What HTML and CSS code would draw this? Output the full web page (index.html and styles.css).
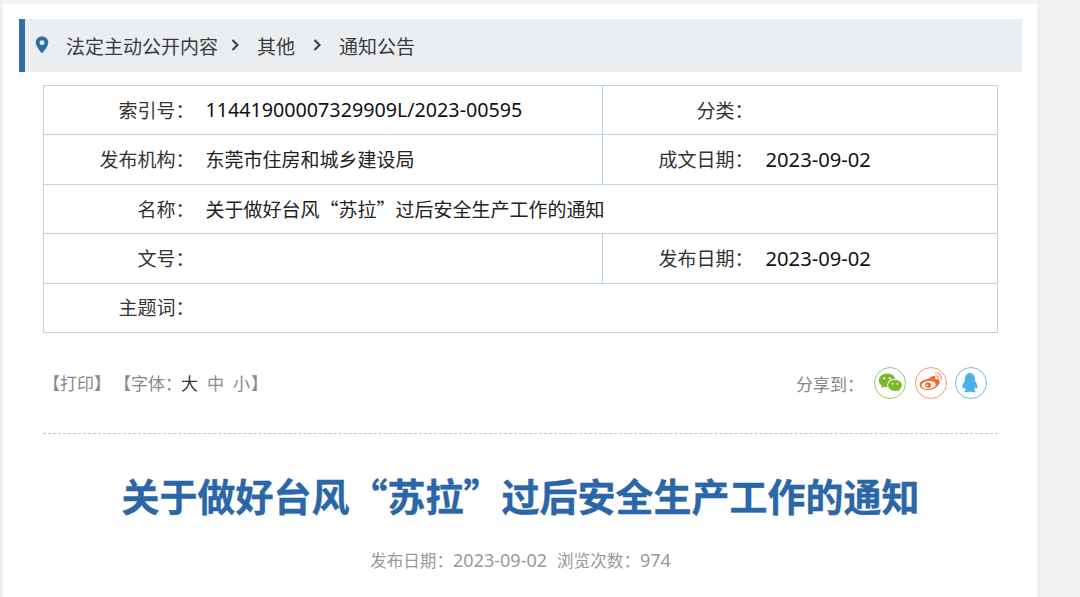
FILE: index.html
```html
<!DOCTYPE html>
<html lang="zh-CN">
<head>
<meta charset="utf-8">
<title>关于做好台风“苏拉”过后安全生产工作的通知</title>
<link rel="stylesheet" href="styles.css">
</head>
<body>
<main class="panel">
  <nav class="crumbs">
    <svg class="pin" viewBox="0 0 14 18" width="14" height="18"><path fill="#2f6ea5" fill-rule="evenodd" d="M7 0.500C3.400 0.500 .7 3.200 .7 6.600 .7 10.600 7 17.500 7 17.500s6.300-6.900 6.300-10.900C13.300 3.200 10.600 .5 7 .5zM7 4.300a2.400 2.400 0 1 1 0 4.800 2.400 2.400 0 0 1 0-4.800z"/></svg>
    <span class="crumb">法定主动公开内容</span>
    <svg class="chev first" viewBox="0 0 8 12" width="8" height="12"><path d="M1.500 1l5 5-5 5" fill="none" stroke="#444" stroke-width="2.200"/></svg>
    <span class="crumb">其他</span>
    <svg class="chev" viewBox="0 0 8 12" width="8" height="12"><path d="M1.500 1l5 5-5 5" fill="none" stroke="#444" stroke-width="2.200"/></svg>
    <span class="crumb">通知公告</span>
  </nav>

  <table class="meta">
    <colgroup><col class="c1"><col class="c2"><col class="c3"><col class="c4"></colgroup>
    <tr>
      <th>索引号：</th><td class="num long">11441900007329909L/2023-00595</td>
      <th>分类：</th><td class="r"></td>
    </tr>
    <tr>
      <th>发布机构：</th><td>东莞市住房和城乡建设局</td>
      <th>成文日期：</th><td class="num r">2023-09-02</td>
    </tr>
    <tr>
      <th>名称：</th><td colspan="3">关于做好台风“苏拉”过后安全生产工作的通知</td>
    </tr>
    <tr>
      <th>文号：</th><td></td>
      <th>发布日期：</th><td class="num r">2023-09-02</td>
    </tr>
    <tr>
      <th>主题词：</th><td colspan="3"></td>
    </tr>
  </table>

  <div class="tools">
    <div class="left">
      <span>【打印】</span><span class="font">【字体：</span><span class="size on">大</span><span class="size">中</span><span class="size">小</span><span class="close">】</span>
    </div>
    <div class="share">
      <span class="share-label">分享到：</span>
      <span class="ico wx">
        <svg viewBox="0 0 24 24" width="26" height="26"><path fill="#7ab82e" d="M9.300 3.200C5 3.200 1.600 6 1.600 9.500c0 2 1.100 3.800 2.900 5l-.7 2.300 2.600-1.400c.9.300 1.900.4 2.900.4h.5c-.2-.5-.3-1.100-.3-1.700 0-3.400 3.100-6 7-6h.4C16.200 5.200 13 3.200 9.300 3.200z"/><path fill="#7ab82e" d="M23 14.100c0-2.900-2.900-5.200-6.400-5.200s-6.400 2.300-6.400 5.200 2.900 5.200 6.400 5.200c.7 0 1.500-.1 2.100-.3l2 1.100-.5-1.800c1.700-1 2.800-2.500 2.800-4.200z"/><circle cx="6.800" cy="7.600" r="1" fill="#fff"/><circle cx="11.800" cy="7.600" r="1" fill="#fff"/><circle cx="14.400" cy="12.800" r=".8" fill="#fff"/><circle cx="18.800" cy="12.800" r=".8" fill="#fff"/></svg>
      </span>
      <span class="ico wb">
        <svg viewBox="0 0 24 24" width="26" height="26"><path fill="#f4672c" fill-rule="evenodd" d="M9.800 8c2.200-2 4.700-3 5.900-1.900.6.600.6 1.500.2 2.600 1.900-.5 4.200-.3 4.200 2 0 3.500-5.100 7.800-10.500 7.800C5.400 18.500 1.500 16.600 1.500 13.300c0-2 2.500-4.200 8.300-5.300zM9.400 10.200c-3.700.3-6.300 2.200-6.100 4.300.2 2 3.300 3.300 6.900 2.900 3.600-.3 6.300-2.200 6.100-4.300-.2-2-3.300-3.300-6.900-2.900z"/><circle cx="9.300" cy="13.900" r="2.700" fill="#f4672c"/><circle cx="8.500" cy="14.200" r=".8" fill="#fff"/><path fill="none" stroke="#f7a27c" stroke-width="1.300" d="M15.500 2.800c3.800-.8 6.900 2.500 5.800 6.200"/><path fill="none" stroke="#f7a27c" stroke-width="1.200" d="M16 5.500c1.900-.4 3.300 1.200 2.800 3"/></svg>
      </span>
      <span class="ico qq">
        <svg viewBox="0 0 24 24" width="26" height="26"><path fill="#4fb0e8" d="M12 2.500c-3.500 0-5.700 2.700-5.700 6v1.700c-1.400 1.900-2.500 4.200-2.300 6.100.1 1 .9.900 1.800-.4.200 1.100.8 2 1.600 2.600-1.100.4-1.900 1-1.600 1.500.3.700 2.400.7 3.900.2.800-.2 1.800-.2 2.600 0 1.500.5 3.600.5 3.900-.2.300-.5-.5-1.100-1.600-1.500.8-.6 1.400-1.500 1.600-2.600.9 1.300 1.700 1.400 1.800.4.200-1.900-.9-4.200-2.300-6.100V8.500c0-3.300-2.200-6-5.700-6z"/></svg>
      </span>
    </div>
  </div>

  <h1 class="title">关于做好台风“苏拉”过后安全生产工作的通知</h1>
  <p class="info"><span>发布日期：<span class="latin">2023-09-02</span></span><span class="views">浏览次数：<span class="latin">974</span></span></p>
</main>
</body>
</html>
```
FILE: styles.css
```css
* { box-sizing: border-box; }
html, body { margin: 0; height: 100%; overflow: hidden; }
body {
  background: #f1f1f1;
  font-family: "Noto Sans CJK SC", "Noto Sans", sans-serif;
  color: #333;
  padding: 4px 43px 0 3px;
}
.panel {
  background: #fff;
  height: 593px;
  padding: 15px 15px 0 16px;
}
.crumbs {
  height: 53px;
  background: #ebeef1;
  border-left: 6px solid #2f6ea5;
  display: flex;
  align-items: center;
  font-size: 19px;
  color: #3a3a3a;
  padding-left: 10px;
}
.pin { margin-right: 17px; margin-top: -1px; flex: none; }
.crumb { line-height: 1; }
.chev { margin: -2px 18px 0; flex: none; }
.chev.first { margin-left: 13px; }
.meta {
  width: 955px;
  margin: 13px 0 0 24px;
  border-collapse: collapse;
  table-layout: fixed;
  font-size: 19px;
}
.c1 { width: 151px; }
.c2 { width: 408px; }
.c3 { width: 151px; }
.meta th, .meta td {
  border: 1px solid #bcd4e8;
  height: 49.400px;
  padding: 0;
  font-weight: 400;
  white-space: nowrap;
  line-height: 1.200;
}
.meta th { text-align: right; color: #333; border-right: 0; }
.meta td { padding-left: 11px; border-left: 0; color: #222; }
.meta td.r { padding-left: 12px; }
.meta td.num { color: #111; font-size: 20.200px; font-family: "Noto Sans", sans-serif; }
.meta td.num.long { font-size: 19.700px; }
.tools {
  width: 955px;
  margin: 0 0 0 24px;
  height: 101px;
  border-bottom: 1px dashed #c4c4c4;
  display: flex;
  justify-content: space-between;
  align-items: center;
  font-size: 17px;
  color: #888;
}
.left { display: flex; align-items: center; }
.font { margin-left: 3px; margin-right: -1px; }
.size { margin-right: 9px; color: #8a8a8a; }
.size.on { color: #333; }
.close { margin-left: -8px; }
.share { display: flex; align-items: center; padding-right: 11px; margin-top: 1px; }
.share-label { margin-right: 10px; }
.ico {
  width: 32px; height: 32px;
  border-radius: 50%;
  border: 1px solid;
  display: flex; align-items: center; justify-content: center;
}
.wx { border-color: #93cf6c; }
.wb { border-color: #f8996c; margin-left: 9px; }
.qq { border-color: #6cbcec; margin-left: 8px; }
.title {
  width: 955px;
  margin: 36px 0 0 24px;
  text-align: center;
  font-size: 38px;
  line-height: 50px;
  font-weight: 700;
  color: #2a66a8;
  -webkit-text-stroke: 0.400px #2a66a8;
}
.info {
  width: 955px;
  margin: 28px 0 0 24px;
  text-align: center;
  font-size: 16.600px;
  line-height: 24px;
  color: #999;
}
.latin { font-family: "Noto Sans", sans-serif; font-size: 18px; }
.views { margin-left: 10px; }
```
